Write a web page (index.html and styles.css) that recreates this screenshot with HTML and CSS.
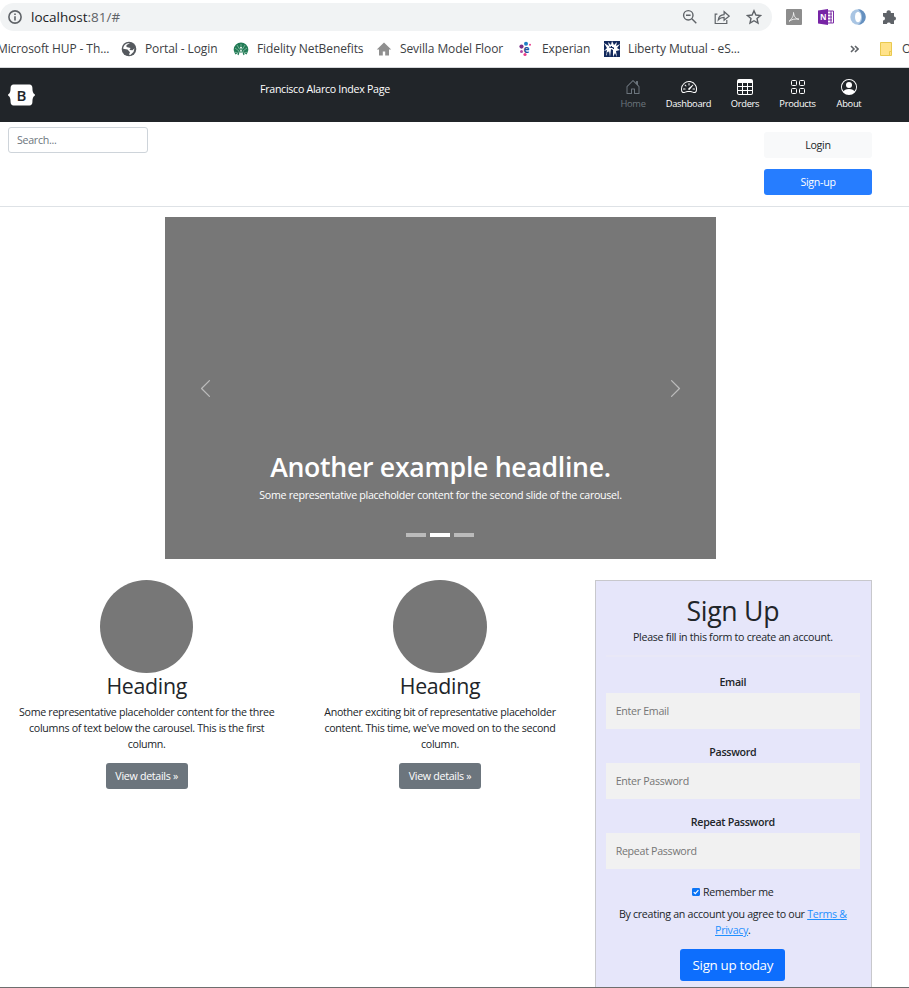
FILE: index.html
```html
<!DOCTYPE html>
<html lang="en">
<head>
<meta charset="utf-8">
<title>Francisco Alarco Index Page</title>
<link rel="stylesheet" href="styles.css">
</head>
<body>
<div class="window">
<div class="browser">
  <div class="toolbar">
    <div class="omnibox">
      <svg class="i-info" viewBox="0 0 14 14"><circle cx="7" cy="7" r="6.1" fill="none" stroke="#5f6368" stroke-width="1.6"/><path d="M6.2 6.2h1.6v4.3H6.2zM6.2 3.5h1.6v1.6H6.2z" fill="#5f6368"/></svg>
      <span class="url">localhost<span>:81/#</span></span>
      <span class="tools">
        <svg viewBox="0 0 16 16" fill="none" stroke="#5f6368" stroke-width="1.4"><circle cx="6.3" cy="6.3" r="4.7"/><path d="M9.8 9.8 14.3 14.3M4 6.3h4.6"/></svg>
        <svg viewBox="0 0 16 16" fill="none" stroke="#5f6368" stroke-width="1.2"><path d="M3.4 5.2H1.2v9.3h11.6v-3.6M4.3 10.8c.5-3.6 2.6-5 5.8-5.2V2.7l5 4.4-5 4.2V8.4c-2.700 0-4.300.6-5.800 2.400z"/></svg>
        <svg viewBox="0 0 16 16" fill="none" stroke="#5f6368" stroke-width="1.4"><path d="m8 1.800 1.900 4.200 4.600.5-3.500 3 1 4.600L8 11.700l-4 2.400 1-4.600-3.500-3 4.600-.5z"/></svg>
      </span>
    </div>
    <div class="extensions">
      <svg viewBox="0 0 16 16"><rect width="16" height="16" rx="1" fill="#8d8d8d"/><path d="M3 12c2-1 5-5 4.500-8.500M7.500 3.500C8 8 10 10 13 10.200M3 12.500c2-2 6-3 10-2.300" fill="none" stroke="#eee"/></svg>
      <svg viewBox="0 0 16 16"><path d="M8 2h7.500v12H8z" fill="#fff" stroke="#7c2ea6"/><path d="M9 5h5M9 8h5M9 11h5M13 2v12" stroke="#7c2ea6"/><path d="M0 1.500 10 0v16L0 14.500z" fill="#7724a5"/><text x="2" y="11" font-size="8" font-weight="700" fill="#fff">N</text></svg>
      <svg viewBox="0 0 16 16"><circle cx="8" cy="8" r="7.700" fill="#a9c5e3"/><path d="M8 .3a7.700 7.700 0 0 1 0 15.400c3-2 4-4 4-7.500S10 2 8 .3z" fill="#6590bf"/><ellipse cx="8" cy="8" rx="3" ry="5.200" fill="#fff"/></svg>
      <svg viewBox="0 0 16 16"><path d="M1 4h3.600a2.200 2.200 0 1 1 4.200 0H12v3.600a2 2 0 1 1 0 4V15H8.800a2.100 2.100 0 0 0-4 0H1v-3.600a2 2 0 0 0 0-4z" fill="#5f6368"/></svg>
    </div>
  </div>
  <div class="bookmarks">
    <span class="bm b1">Microsoft HUP - Th...</span>
    <svg class="fav f2" viewBox="0 0 16 16"><circle cx="8" cy="8" r="7.300" fill="#55595e"/><path d="M9 2.200 5.500 4v2l4 1-1 2 3 .2 2-2L12.500 11 9 14.200l-1-1 1-2-2.500-2.700-4.300-.8C2.500 4 5 2 9 2.200z" fill="#fff"/></svg>
    <span class="bm b2">Portal - Login</span>
    <svg class="fav f3" viewBox="0 0 16 16"><path d="M2.500 13.500A7.300 7.300 0 1 1 13.500 13.500L11 12 8.800 6H7.200L5 12z" fill="#217a55"/><path d="M8 10 8 3M7 9 4 4M9 9l3-5M6 10 2 7M10 10l4-3M5 12l-4-1M11 12l4-1" stroke="#a8d2bd" stroke-width=".6"/><path d="M5 14 7 8h2l2 6M7 11h2" fill="none" stroke="#217a55" stroke-width="1.200"/></svg>
    <span class="bm b3">Fidelity NetBenefits</span>
    <svg class="fav f4" viewBox="0 0 16 16"><path d="M8 1.500.8 8.500H3V14.500h3.800v-4h2.400v4H13V8.500h2.200z" fill="#8f8f8f"/></svg>
    <span class="bm b4">Sevilla Model Floor</span>
    <svg class="fav f5" viewBox="0 0 16 16"><circle cx="8" cy="2.800" r="2" fill="#1c7fc4"/><circle cx="12" cy="3.800" r="1" fill="#e83e8c"/><circle cx="3.500" cy="5.600" r="2.100" fill="#792f87"/><circle cx="3.500" cy="10.500" r="1.500" fill="#b04aa6"/><circle cx="7" cy="13.500" r="1.600" fill="#e83e8c"/><text x="5.500" y="11.500" font-size="10" font-weight="700" fill="#24549b">e</text></svg>
    <span class="bm b5">Experian</span>
    <svg class="fav f6" viewBox="0 0 16 16"><path d="M0 0h16v16H0z" fill="#12295c"/><path d="m0 2 5 3-1-4 3 3 1-4 2 4 3-3-1 4 4-2-3 4 3 2-4 1 1 6-2-4-2 4V9L7 8l-1 8-1-6-3 5 1-6-3 1 3-3z" fill="#fff"/><path d="m5 6 5 1M7 5l3 3M3 13l1-2" stroke="#12295c"/></svg>
    <span class="bm b6">Liberty Mutual - eS...</span>
    <svg class="more" viewBox="0 0 9 8" fill="none" stroke="#5f6368" stroke-width="1.600"><path d="m1 1 3 3-3 3M5 1l3 3-3 3"/></svg>
    <span class="rule"></span>
    <svg class="folder" viewBox="0 0 12 14"><path d="M.5.5h11v9.500h-1.500v3.500H.5z" fill="#ffe28a" stroke="#e9c94f"/><path d="M9.500 9.500h2v4h-2z" fill="#ffe28a" stroke="#e9c94f"/></svg>
    <span class="bm">Other</span>
  </div>
</div>

<header class="navbar">
  <svg class="logo" viewBox="0 0 27 22"><path d="M5.500.5h16c1.800 0 2.900 1.500 2.900 3.300 0 3.400.6 6 2.400 6.500v1.400c-1.800.5-2.400 3.100-2.400 6.500 0 1.800-1.100 3.300-2.900 3.300h-16c-1.800 0-2.900-1.500-2.900-3.300 0-3.400-.6-6-2.400-6.500v-1.400c1.800-.5 2.400-3.100 2.400-6.500C2.600 2 3.700.5 5.500.5z" fill="#fff"/><text x="8.600" y="16.600" class="logo-letter">B</text></svg>
  <div class="site-title">Francisco Alarco Index Page</div>
  <nav>
    <a class="n-home"><svg viewBox="0 0 16 16"><path d="M8.354 1.146a.5.5 0 0 0-.708 0l-6 6A.5.5 0 0 0 1.500 7.500v7a.5.5 0 0 0 .5.500h4.500a.5.5 0 0 0 .5-.5v-4h2v4a.5.5 0 0 0 .5.500H14a.5.5 0 0 0 .5-.5v-7a.5.5 0 0 0-.146-.354L13 5.793V2.500a.5.5 0 0 0-.5-.5h-1a.5.5 0 0 0-.5.500v1.293L8.354 1.146zM2.500 14V7.707l5.500-5.500 5.500 5.500V14H10v-4a.5.5 0 0 0-.5-.5h-3a.5.5 0 0 0-.5.500v4H2.500z"/></svg>Home</a>
    <a class="n-dash"><svg viewBox="0 0 16 16"><path d="M8 4a.5.5 0 0 1 .5.500V6a.5.5 0 0 1-1 0V4.500A.5.5 0 0 1 8 4zM3.732 5.732a.5.5 0 0 1 .707 0l.915.914a.5.5 0 1 1-.708.708l-.914-.915a.5.5 0 0 1 0-.707zM2 10a.5.5 0 0 1 .5-.5h1.586a.5.5 0 0 1 0 1H2.500A.5.5 0 0 1 2 10zm9.500 0a.5.5 0 0 1 .5-.5h1.500a.5.5 0 0 1 0 1H12a.5.5 0 0 1-.5-.5zm.754-4.246a.389.389 0 0 0-.527-.02L7.547 9.310a.91.91 0 1 0 1.302 1.258l3.434-4.297a.389.389 0 0 0-.029-.518z"/><path fill-rule="evenodd" d="M0 10a8 8 0 1 1 15.547 2.661c-.442 1.253-1.845 1.602-2.932 1.250C11.309 13.488 9.475 13 8 13c-1.474 0-3.310.488-4.615.911-1.087.352-2.490.003-2.932-1.250A7.988 7.988 0 0 1 0 10zm8-7a7 7 0 0 0-6.603 9.329c.203.575.923.876 1.680.630C4.397 12.533 6.358 12 8 12s3.604.532 4.923.960c.757.245 1.477-.056 1.680-.631A7 7 0 0 0 8 3z"/></svg>Dashboard</a>
    <a class="n-orders"><svg viewBox="0 0 16 16"><path fill-rule="evenodd" d="M0 2a2 2 0 0 1 2-2h12a2 2 0 0 1 2 2v12a2 2 0 0 1-2 2H2a2 2 0 0 1-2-2V2zm15 2h-4v3h4V4zm0 4h-4v3h4V8zm0 4h-4v3h3a1 1 0 0 0 1-1v-2zm-5 3v-3H6v3h4zm-5 0v-3H1v2a1 1 0 0 0 1 1h3zm-4-4h4V8H1v3zm0-4h4V4H1v3zm5-3v3h4V4H6zm4 4H6v3h4V8z"/></svg>Orders</a>
    <a class="n-products"><svg viewBox="0 0 16 16" class="line"><rect x="1.500" y="1.500" width="5" height="5" rx="1"/><rect x="9.500" y="1.500" width="5" height="5" rx="1"/><rect x="1.500" y="9.500" width="5" height="5" rx="1"/><rect x="9.500" y="9.500" width="5" height="5" rx="1"/></svg>Products</a>
    <a class="n-about"><svg viewBox="0 0 16 16"><path d="M11 6a3 3 0 1 1-6 0 3 3 0 0 1 6 0z"/><path fill-rule="evenodd" d="M0 8a8 8 0 1 1 16 0A8 8 0 0 1 0 8zm8-7a7 7 0 0 0-5.468 11.370C3.242 11.226 4.805 10 8 10s4.757 1.225 5.468 2.370A7 7 0 0 0 8 1z"/></svg>About</a>
  </nav>
</header>

<section class="actions">
  <input class="search" placeholder="Search...">
  <div class="account">
    <button class="btn light">Login</button>
    <button class="btn primary">Sign-up</button>
  </div>
</section>

<section class="carousel">
  <svg class="arrow prev" viewBox="0 0 16 16"><path d="M11.354 1.646a.5.5 0 0 1 0 .708L5.707 8l5.647 5.646a.5.5 0 0 1-.708.708l-6-6a.5.5 0 0 1 0-.708l6-6a.5.5 0 0 1 .708 0z"/></svg>
  <div class="caption">
    <h1>Another example headline.</h1>
    <p>Some representative placeholder content for the second slide of the carousel.</p>
    <div class="dots"><i></i><i class="on"></i><i></i></div>
  </div>
  <svg class="arrow next" viewBox="0 0 16 16"><path d="M4.646 1.646a.5.5 0 0 1 .708 0l6 6a.5.5 0 0 1 0 .708l-6 6a.5.5 0 0 1-.708-.708L10.293 8 4.646 2.354a.5.5 0 0 1 0-.708z"/></svg>
</section>

<main class="columns">
  <article>
    <div class="circle"></div>
    <h2>Heading</h2>
    <p class="l1">Some representative placeholder content for the three<br>columns of text below the carousel. This is the first<br>column.</p>
    <button class="btn secondary">View details »</button>
  </article>
  <article>
    <div class="circle"></div>
    <h2>Heading</h2>
    <p class="l2">Another exciting bit of representative placeholder<br>content. This time, we've moved on to the second<br>column.</p>
    <button class="btn secondary">View details »</button>
  </article>
  <form class="signup">
    <h1>Sign Up</h1>
    <p class="intro">Please fill in this form to create an account.</p>
    <hr>
    <label>Email</label>
    <input class="field" placeholder="Enter Email">
    <label>Password</label>
    <input class="field" placeholder="Enter Password">
    <label>Repeat Password</label>
    <input class="field" placeholder="Repeat Password">
    <div class="remember"><svg viewBox="0 0 9 9"><rect width="9" height="9" rx="1.300" fill="#0d75f5"/><path d="m2 4.700 1.700 1.700L7.200 2.500" fill="none" stroke="#fff" stroke-width="1.300"/></svg>Remember me</div>
    <p class="terms">By creating an account you agree to our <a>Terms &amp;<br>Privacy</a>.</p>
    <button type="button" class="btn submit">Sign up today</button>
  </form>
</main>
</div>
</body>
</html>
```
FILE: styles.css
```css
* { box-sizing: border-box; }
body { margin: 0; background: #fff; color: #212529; font: 10.67px/16px "Open Sans", "Noto Sans", sans-serif; letter-spacing: -0.3px; }
h1, h2, p { margin: 0; font-weight: 400; }
button, input { font: inherit; letter-spacing: inherit; }
svg { display: block; flex: none; }
.window { height: 988px; overflow: hidden; border-bottom: 1px solid #6e6e6e; }

.browser { height: 68px; border-bottom: 1px solid #d5d7da; color: #3c4043; }
.toolbar { display: flex; height: 34px; padding-top: 3px; }
.omnibox { display: flex; align-items: center; width: 772px; height: 28px; padding: 0 10px 0 8px; background: #f1f3f4; border-radius: 14px; }
.i-info { width: 14px; height: 14px; }
.url { margin-left: 9px; font-size: 13.5px; color: #202124; letter-spacing: 0; }
.url span { color: #5f6368; }
.tools { display: flex; gap: 16px; margin-left: auto; }
.tools svg, .extensions svg { width: 16px; height: 16px; }
.extensions { display: flex; align-items: center; gap: 16px; height: 28px; margin-left: 14px; }
.bookmarks { display: flex; align-items: center; height: 30px; overflow: hidden; font-size: 12px; white-space: nowrap; }
.bm { flex: none; letter-spacing: -0.1px; }
.b1 { width: 107px; margin-left: -3px; }
.b2 { width: 72px; }
.b3 { width: 103px; }
.b4 { width: 102px; }
.b5 { width: 46px; }
.b6 { width: 110px; }
.fav { width: 16px; height: 16px; margin-right: 8px; }
.f2 { margin-left: 17px; }
.f3, .f4, .f5, .f6 { margin-left: 16px; }
.more { width: 9px; height: 8px; margin-left: 112px; }
.rule { width: 1px; height: 16px; margin: 0 12px 0 9px; background: #cfd1d4; }
.folder { width: 12px; height: 14px; margin-right: 10px; }

.navbar { display: flex; height: 54px; padding-left: 8px; background: #212529; color: #fff; }
.logo { width: 27px; height: 22px; margin-top: 16px; }
.logo-letter { font-size: 15px; font-weight: 600; fill: #212529; }
.site-title { width: 350px; margin: 13px 0 0 225px; white-space: nowrap; }
nav { display: flex; padding-top: 11px; text-align: center; font-size: 9.33px; line-height: 14px; }
nav a { display: flex; flex-direction: column; align-items: center; gap: 2px; }
nav svg { width: 16px; height: 16px; fill: currentColor; }
nav svg.line { fill: none; stroke: currentColor; }
.n-home { width: 46px; color: #6c757d; }
.n-dash { width: 65px; }
.n-orders { width: 48px; }
.n-products { width: 57px; }
.n-about { width: 46px; }

.actions { display: flex; height: 85px; padding: 5px 37px 0 8px; justify-content: space-between; border-bottom: 1px solid #dee2e6; }
.search { width: 140px; height: 26px; padding: 0 8px; border: 1px solid #ced4da; border-radius: 3px; }
.search::placeholder { color: #6c757d; }
.account { display: flex; flex-direction: column; gap: 11px; width: 108px; padding-top: 5px; }
.btn { height: 26px; padding: 0; border: 0; border-radius: 3px; color: #fff; text-align: center; }
.light { background: #f8f9fa; color: #212529; }
.primary { background: #267dff; }
.secondary { width: 82px; background: #6c757d; }

.carousel { display: flex; align-items: center; justify-content: space-between; width: 551px; height: 342px; margin: 10px 0 0 165px; padding: 0 30px; background: #777; color: #fff; }
.arrow { width: 21px; height: 21px; fill: #fff; opacity: .5; }
.caption { align-self: flex-end; text-align: center; white-space: nowrap; padding-bottom: 22px; }
.caption h1 { font-size: 26.67px; line-height: 32px; font-weight: 600; }
.caption p { margin-top: 4px; }
.dots { display: flex; justify-content: center; gap: 4px; margin-top: 30px; }
.dots i { width: 20px; height: 4px; background: #bbb; }
.dots .on { background: #fff; }

.columns { display: grid; grid-template-columns: repeat(3, 293.33px); width: 880px; margin-top: 21px; text-align: center; white-space: nowrap; }
.circle { width: 93.33px; height: 93.33px; margin: 0 auto; border-radius: 50%; background: #777; }
h2 { font-size: 21.33px; line-height: 26px; }
article p { margin: 5px 0 11px; }
.signup { height: 430px; margin: 0 8px; padding: 14px 11px 0 10px; border: 1px solid #c8c8cc; background: #e6e6fa; }
.signup h1 { font-size: 26.67px; line-height: 32px; font-weight: 500; }
.intro { margin-top: 2px; }
hr { height: 2px; margin: 10px 0 17px; border: 0; background: #e9e8f7; }
label { display: block; font-weight: 600; line-height: 16px; margin-bottom: 3px; }
.field { display: block; width: 100%; height: 36px; margin-bottom: 15px; padding: 0 10px; border: 0; background: #f1f1f1; }
.field::placeholder { color: #757575; }
.remember { display: flex; justify-content: center; align-items: center; gap: 3px; }
.remember svg { width: 8px; height: 8px; }
.terms { margin: 6px 0 11px; }
.terms a { color: #1e90ff; text-decoration: underline; }
.submit { width: 105px; height: 32px; font-size: 13.33px; background: #0d6efd; }
```
